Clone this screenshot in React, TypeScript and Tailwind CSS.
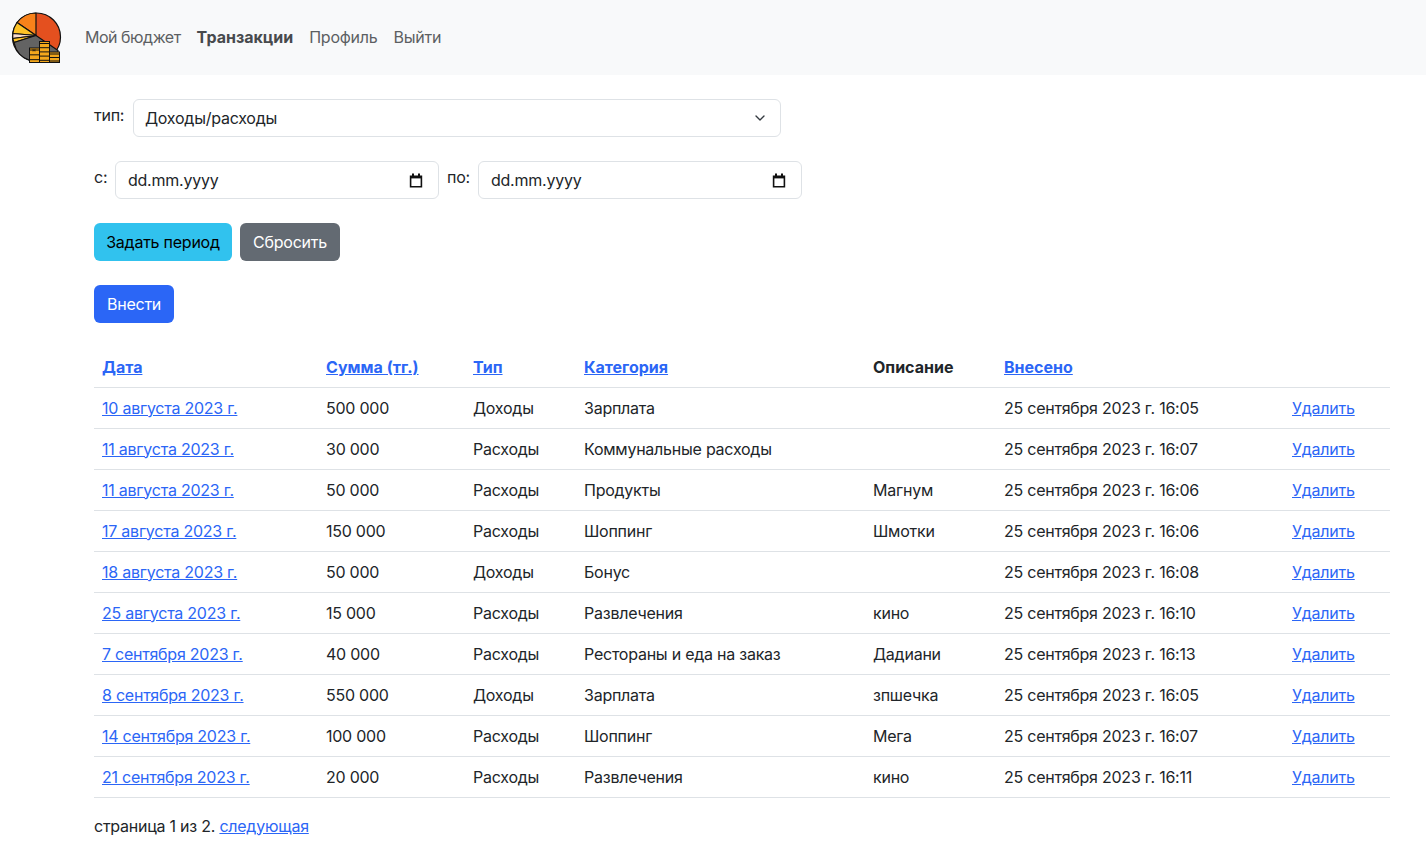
import { ChevronDown } from "lucide-react";

const rows = [
  ["10 августа 2023 г.", "500 000", "Доходы", "Зарплата", "", "25 сентября 2023 г. 16:05"],
  ["11 августа 2023 г.", "30 000", "Расходы", "Коммунальные расходы", "", "25 сентября 2023 г. 16:07"],
  ["11 августа 2023 г.", "50 000", "Расходы", "Продукты", "Магнум", "25 сентября 2023 г. 16:06"],
  ["17 августа 2023 г.", "150 000", "Расходы", "Шоппинг", "Шмотки", "25 сентября 2023 г. 16:06"],
  ["18 августа 2023 г.", "50 000", "Доходы", "Бонус", "", "25 сентября 2023 г. 16:08"],
  ["25 августа 2023 г.", "15 000", "Расходы", "Развлечения", "кино", "25 сентября 2023 г. 16:10"],
  ["7 сентября 2023 г.", "40 000", "Расходы", "Рестораны и еда на заказ", "Дадиани", "25 сентября 2023 г. 16:13"],
  ["8 сентября 2023 г.", "550 000", "Доходы", "Зарплата", "зпшечка", "25 сентября 2023 г. 16:05"],
  ["14 сентября 2023 г.", "100 000", "Расходы", "Шоппинг", "Мега", "25 сентября 2023 г. 16:07"],
  ["21 сентября 2023 г.", "20 000", "Расходы", "Развлечения", "кино", "25 сентября 2023 г. 16:11"],
];

const link = "text-[#2b66f6] underline";

const coins = [
  [29.5, 47.5, 3],
  [39.5, 41, 5],
  [49.5, 51.5, 2.5],
];

// drawn in page coordinates, hence the viewBox offset
const Logo = () => (
  <svg width="52" height="52" viewBox="10 10.5 52 52" className="block">
    <g stroke="#111" strokeWidth="1.2" strokeLinejoin="round">
      <circle cx="36.5" cy="36.5" r="24" fill="#e4501f" />
      <path d="M36 35 L36 12.5 A24 24 0 0 0 17 22 Z" fill="#f8821a" />
      <path d="M36 35 L17 22 A24 24 0 0 0 12.8 33 Z" fill="#fdc326" />
      <path d="M36 35 L12.8 33 L12.7 38 Z" fill="#f9dccb" />
      <path d="M36 35 L12.7 38 L14 42 Z" fill="#fdc326" />
      <path d="M36 35 L14 42 A24 24 0 0 0 30 60 L58 60 L58 50 Z" fill="#636363" />
    </g>
    {coins.map(([x, y, n]) => (
      <g key={x} fill="#f3a71c" stroke="#111" strokeWidth="1">
        <rect x={x} y={y} width="10" height={62 - y} />
        {Array.from({ length: Math.ceil(n) }).map((_, i) => (
          <path key={i} d={`M${x} ${y + ((62 - y) / Math.ceil(n)) * i + 2}h10`} fill="none" />
        ))}
      </g>
    ))}
    <path d="M33 48.5v2.5M35 48.5v2.5M33 49.8h2" stroke="#111" strokeWidth="0.6" fill="none" />
  </svg>
);

const CalendarIcon = () => (
  <svg width="14" height="15" viewBox="0 0 14 15" className="block">
    <path d="M3 0.5h2v2h4v-2h2v2h2.2v12H0.8v-12H3z" fill="#111" />
    <rect x="2.4" y="5.4" width="9.2" height="7.6" fill="#fff" />
  </svg>
);

const DateField = () => (
  <div className="flex h-[38px] w-[324px] items-center justify-between rounded-md border border-[#dee2e6] bg-white pl-3 pr-[15px]">
    <span>dd.mm.yyyy</span>
    <CalendarIcon />
  </div>
);

const App = () => {
  return (
    <div className="min-h-[849px] bg-white text-base leading-6 tracking-[-0.015em] text-[#212529] font-['Inter','Noto_Sans',sans-serif]">
      <nav className="flex h-[75px] items-center bg-[#f8f9fa] pb-[2px] pl-[10px]">
        <Logo />
        <div className="ml-[23px] flex gap-4 text-[#5c5f62]">
          <span className="tracking-[-0.03em]">Мой бюджет</span>
          <span className="font-bold tracking-normal text-[#474a4d]">Транзакции</span>
          <span>Профиль</span>
          <span>Выйти</span>
        </div>
      </nav>

      <main className="pl-[94px] pr-[36px] pt-6">
        <div className="flex w-[687px] gap-2">
          <label className="w-[31px] pt-1">тип:</label>
          <div className="flex h-[38px] flex-1 items-center justify-between rounded-md border border-[#dee2e6] pl-[11px] pr-3">
            <span>Доходы/расходы</span>
            <ChevronDown size={16} strokeWidth={2} className="text-[#343a40]" />
          </div>
        </div>

        <div className="mt-6 flex gap-2">
          <label className="w-[13px] pt-1">с:</label>
          <DateField />
          <label className="w-[23px] pt-1">по:</label>
          <DateField />
        </div>

        <div className="mt-6 flex gap-2">
          <button className="h-[38px] w-[138px] rounded-md bg-[#31c2ee] text-black">Задать период</button>
          <button className="h-[38px] w-[100px] rounded-md bg-[#636a72] text-white">Сбросить</button>
        </div>

        <button className="mt-6 block h-[38px] w-[80px] rounded-md bg-[#2b66f6] text-white">Внести</button>

        <table className="mt-6 w-full table-fixed border-collapse">
          <thead>
            <tr className="border-b border-[#dee2e6] text-left tracking-normal">
              <th className="h-[40px] w-[224px] px-2 font-bold"><span className={link}>Дата</span></th>
              <th className="w-[147px] px-2 font-bold"><span className={link}>Сумма (тг.)</span></th>
              <th className="w-[111px] px-2 font-bold"><span className={link}>Тип</span></th>
              <th className="w-[289px] px-2 font-bold"><span className={link}>Категория</span></th>
              <th className="w-[131px] px-2 font-bold">Описание</th>
              <th className="w-[288px] px-2 font-bold"><span className={link}>Внесено</span></th>
              <th className="px-2" />
            </tr>
          </thead>
          <tbody>
            {rows.map((r, i) => (
              <tr key={i} className="border-b border-[#dee2e6]">
                <td className="h-[41px] px-2"><span className={link}>{r[0]}</span></td>
                <td className="px-2">{r[1]}</td>
                <td className="px-2">{r[2]}</td>
                <td className="px-2">{r[3]}</td>
                <td className="px-2">{r[4]}</td>
                <td className="px-2">{r[5]}</td>
                <td className="px-2"><span className={link}>Удалить</span></td>
              </tr>
            ))}
          </tbody>
        </table>

        <p className="mt-4">
          страница 1 из 2. <span className={link}>следующая</span>
        </p>
      </main>
    </div>
  );
};

export default App;
